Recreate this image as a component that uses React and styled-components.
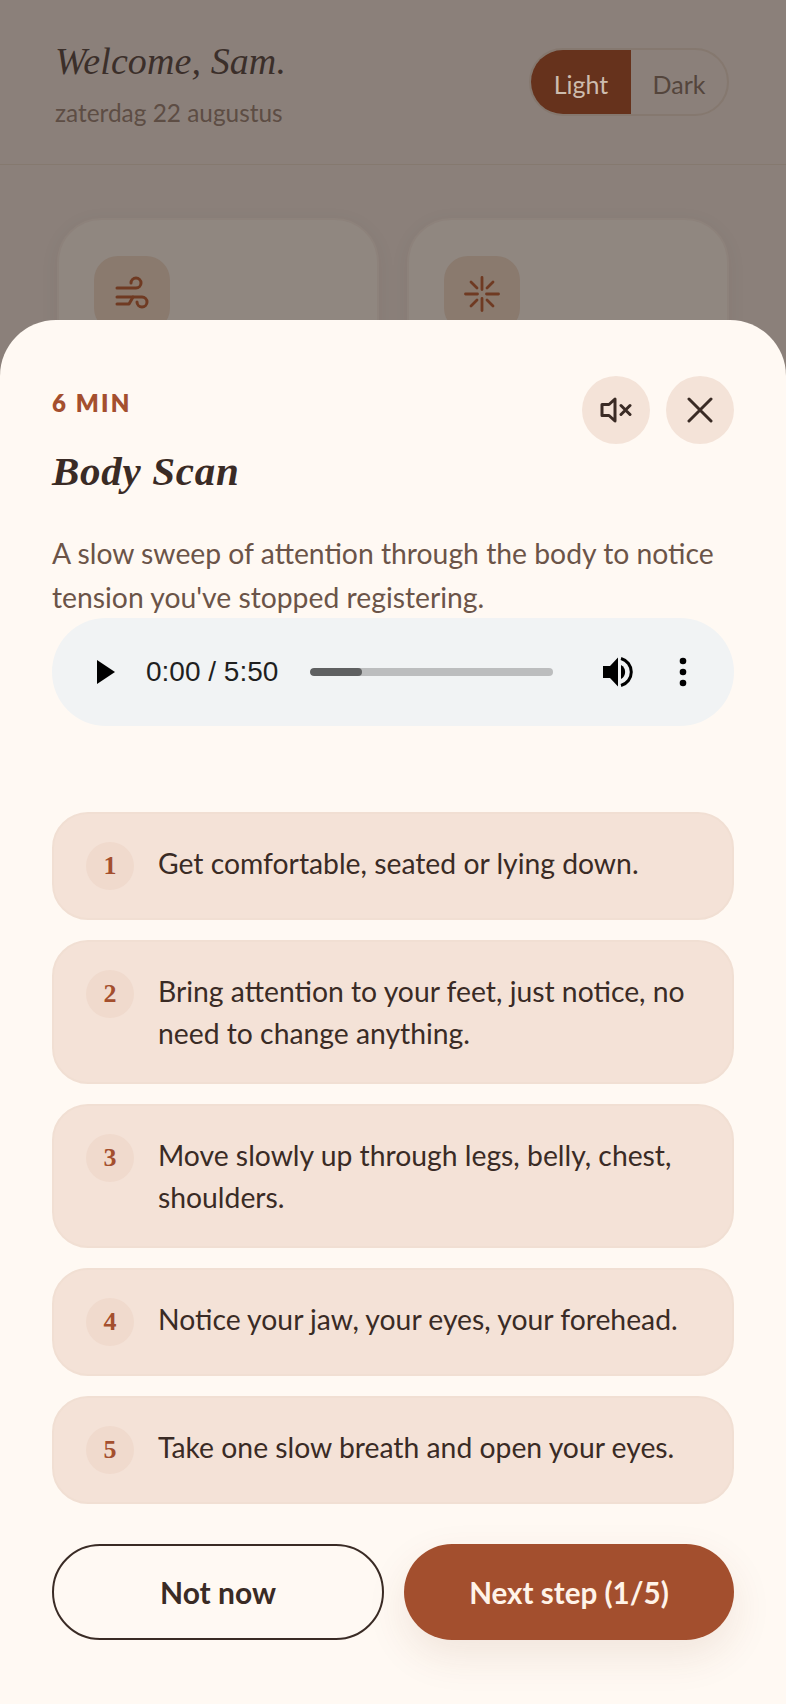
import React from "react";
import styled, { createGlobalStyle } from "styled-components";

const Global = createGlobalStyle`
  html, body { margin: 0; padding: 0; background: #8b807a; }
  * { box-sizing: border-box; }
  body { font-family: "Lato", "Noto Sans", sans-serif; }
`;

const serif = `"Liberation Serif", "Times New Roman", serif`;

const Screen = styled.div`
  position: relative;
  width: 786px;
  height: 1704px;
  overflow: hidden;
  background: #8b807a;
`;

const TopBar = styled.header`
  display: flex;
  justify-content: space-between;
  align-items: flex-start;
  height: 165px;
  padding: 39px 57px 0 55px;
  border-bottom: 1px solid #85796f;
`;

const Greeting = styled.h1`
  margin: 0;
  font: italic 400 38px/44px ${serif};
  letter-spacing: 0.1px;
  color: #3b2f2a;
`;

const DateLine = styled.p`
  margin: 13px 0 0;
  font-size: 24.4px;
  line-height: 34px;
  color: #5d4d44;
`;

const Toggle = styled.div`
  display: flex;
  width: 200px;
  height: 68px;
  margin-top: 9px;
  border: 2px solid #85786f;
  border-radius: 34px;
  overflow: hidden;
`;

const ToggleOption = styled.span`
  flex: ${(p) => (p.$active ? "0 0 100px" : "1")};
  display: flex;
  align-items: center;
  justify-content: center;
  padding-top: 3px;
  font-size: 25px;
  background: ${(p) => (p.$active ? "#66321c" : "transparent")};
  color: ${(p) => (p.$active ? "#cdbcae" : "#54453c")};
`;

const CardGrid = styled.div`
  display: grid;
  grid-template-columns: 322px 322px;
  gap: 28px;
  padding: 53px 57px 0;
`;

const Card = styled.div`
  height: 240px;
  padding: 36px 35px;
  border: 2px solid #8d827b;
  border-radius: 44px;
  background: #908780;
  box-shadow: 0 4px 20px rgba(60, 40, 30, 0.05);
`;

const IconTile = styled.div`
  display: flex;
  align-items: center;
  justify-content: center;
  width: 76px;
  height: 76px;
  border-radius: 24px;
  background: #8a7a6e;
  color: #6f3a22;
`;

const Sheet = styled.section`
  position: absolute;
  left: 0;
  right: 0;
  top: 320px;
  bottom: 0;
  padding: 56px 52px 0;
  border-radius: 56px 56px 0 0;
  background: #fff9f3;
`;

const SheetHead = styled.div`
  display: flex;
  justify-content: space-between;
  align-items: flex-start;
  height: 68px;
`;

const SheetTitles = styled.div`
  padding-top: 12px;
`;

const Kicker = styled.div`
  font-size: 24px;
  line-height: 30px;
  font-weight: 800;
  letter-spacing: 2.2px;
  color: #a44f2e;
`;

const Title = styled.h2`
  margin: 29px 0 0;
  font: italic 700 41px/48px ${serif};
  letter-spacing: 0.7px;
  color: #3a2b25;
`;

const HeadActions = styled.div`
  display: flex;
  gap: 16px;
`;

const RoundButton = styled.button`
  display: flex;
  align-items: center;
  justify-content: center;
  width: 68px;
  height: 68px;
  padding: 0;
  border: 0;
  border-radius: 50%;
  background: #f4e3d8;
  color: #3a2b25;
`;

const Lead = styled.p`
  margin: 87px 0 -1px;
  font-size: 28.3px;
  line-height: 44px;
  color: #6b5448;
`;

const Player = styled.div`
  display: flex;
  align-items: center;
  height: 108px;
  padding-left: 45px;
  border-radius: 54px;
  background: #f1f3f4;
`;

const Time = styled.span`
  margin: 0 32px 0 31px;
  width: 132px;
  white-space: nowrap;
  font: 400 28px/32px "Liberation Sans", Arial, sans-serif;
  color: #1f1f1f;
`;

const Track = styled.div`
  width: 243px;
  height: 8px;
  border-radius: 4px;
  overflow: hidden;
  background: #bcbdbe;
`;

const TrackFill = styled.div`
  height: 100%;
  border-radius: 4px;
  background: #5f6061;
`;

const VolumeIcon = styled.svg`
  margin-left: 50px;
`;

const MoreIcon = styled.svg`
  margin-left: 46px;
`;

const Steps = styled.ol`
  display: flex;
  flex-direction: column;
  gap: 20px;
  margin: 86px 0 0;
  padding: 0;
  list-style: none;
`;

const Step = styled.li`
  display: flex;
  align-items: flex-start;
  gap: 24px;
  padding: 28px 32px;
  border: 2px solid #f1dfd3;
  border-radius: 36px;
  background: #f4e2d7;
`;

const StepNumber = styled.span`
  flex: 0 0 48px;
  display: flex;
  align-items: center;
  justify-content: center;
  height: 48px;
  border-radius: 50%;
  background: #f0dacd;
  font: 700 26px/1 ${serif};
  color: #a44f2e;
`;

const StepText = styled.span`
  font-size: 28.3px;
  line-height: 42px;
  color: #3a2b25;
`;

const Actions = styled.div`
  display: grid;
  grid-template-columns: 332px 330px;
  gap: 20px;
  margin-top: 40px;
`;

const ActionButton = styled.button`
  height: 96px;
  border-radius: 48px;
  font-family: inherit;
  font-size: ${(p) => (p.$primary ? "29.6px" : "30px")};
  font-weight: 700;
  border: ${(p) => (p.$primary ? "0" : "2px solid #3a2b25")};
  background: ${(p) => (p.$primary ? "#a34f2e" : "transparent")};
  color: ${(p) => (p.$primary ? "#fff3e8" : "#3a2b25")};
  box-shadow: ${(p) => (p.$primary ? "0 16px 40px rgba(120, 60, 30, 0.10)" : "none")};
`;

const steps = [
  "Get comfortable, seated or lying down.",
  "Bring attention to your feet, just notice, no need to change anything.",
  "Move slowly up through legs, belly, chest, shoulders.",
  "Notice your jaw, your eyes, your forehead.",
  "Take one slow breath and open your eyes.",
];

const WindGlyph = () => (
  <svg width="36" height="36" viewBox="0 0 36 36" fill="none" stroke="currentColor" strokeWidth="3" strokeLinecap="round" strokeLinejoin="round">
    <path d="M3 12h19a5 5 0 1 0-5-5" />
    <path d="M3 21h25a5 5 0 1 1-5 5" />
    <path d="M3 28h12l4-7" />
  </svg>
);

const BurstGlyph = () => (
  <svg width="36" height="36" viewBox="0 0 36 36" fill="none" stroke="currentColor" strokeWidth="2.8" strokeLinecap="round">
    <path d="M18 1.500v12M18 22.500v12M1.500 18h12M22.500 18h12" />
    <path d="M7 6l6 6M29 6l-6 6M7 30l6-6M29 30l-6-6" />
  </svg>
);

const MuteGlyph = () => (
  <svg width="32" height="26" viewBox="0 0 32 26" fill="none" stroke="currentColor" strokeWidth="3" strokeLinecap="round" strokeLinejoin="round">
    <path d="M2 7.500h7L15 2v22L9 18.500H2z" />
    <path d="M21 8.500l9 9M30 8.500l-9 9" />
  </svg>
);

const CloseGlyph = () => (
  <svg width="26" height="26" viewBox="0 0 26 26" fill="none" stroke="currentColor" strokeWidth="3" strokeLinecap="round">
    <path d="M2 2l22 22M24 2L2 24" />
  </svg>
);

export default function App() {
  return (
    <>
      <Global />
      <Screen>
        <TopBar>
          <div>
            <Greeting>Welcome, Sam.</Greeting>
            <DateLine>zaterdag 22 augustus</DateLine>
          </div>
          <Toggle>
            <ToggleOption $active>Light</ToggleOption>
            <ToggleOption>Dark</ToggleOption>
          </Toggle>
        </TopBar>
        <CardGrid>
          <Card>
            <IconTile><WindGlyph /></IconTile>
          </Card>
          <Card>
            <IconTile><BurstGlyph /></IconTile>
          </Card>
        </CardGrid>
        <Sheet>
          <SheetHead>
            <SheetTitles>
              <Kicker>6 MIN</Kicker>
              <Title>Body Scan</Title>
            </SheetTitles>
            <HeadActions>
              <RoundButton aria-label="Mute"><MuteGlyph /></RoundButton>
              <RoundButton aria-label="Close"><CloseGlyph /></RoundButton>
            </HeadActions>
          </SheetHead>
          <Lead>A slow sweep of attention through the body to notice tension you've stopped registering.</Lead>
          <Player>
            <svg width="18" height="24" viewBox="0 0 18 24"><path d="M0 0l18 12L0 24z" fill="#000" /></svg>
            <Time>0:00 / 5:50</Time>
            <Track><TrackFill style={{ width: "21.5%" }} /></Track>
            <VolumeIcon width="30" height="30" viewBox="0 0 30 30">
              <path d="M0 9h7l8-8.500v29L7 21H0z" fill="#000" />
              <path d="M18 8a8 8 0 0 1 0 14z" fill="#000" />
              <path d="M18 1.500a14 14 0 0 1 0 27" fill="none" stroke="#000" strokeWidth="3" />
            </VolumeIcon>
            <MoreIcon width="8" height="30" viewBox="0 0 8 30">
              <circle cx="4" cy="4" r="3.300" />
              <circle cx="4" cy="15" r="3.300" />
              <circle cx="4" cy="26" r="3.300" />
            </MoreIcon>
          </Player>
          <Steps>
            {steps.map((text, i) => (
              <Step key={i}>
                <StepNumber>{i + 1}</StepNumber>
                <StepText>{text}</StepText>
              </Step>
            ))}
          </Steps>
          <Actions>
            <ActionButton>Not now</ActionButton>
            <ActionButton $primary>Next step (1/5)</ActionButton>
          </Actions>
        </Sheet>
      </Screen>
    </>
  );
}
